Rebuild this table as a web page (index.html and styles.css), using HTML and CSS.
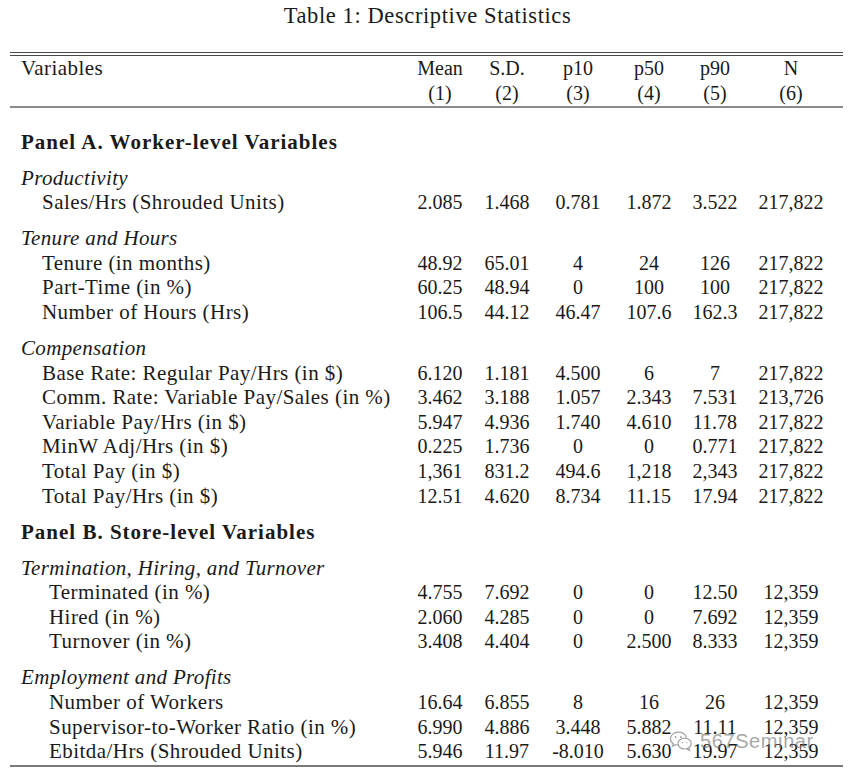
FILE: index.html
```html
<!DOCTYPE html>
<html>
<head>
<meta charset="utf-8">
<link rel="stylesheet" href="styles.css">
</head>
<body>
<div class="page">
  <div class="title">Table 1: Descriptive Statistics</div>
  <div class="rule-double"></div>
  <div class="row"><span class="label">Variables</span><span>Mean</span><span>S.D.</span><span>p10</span><span>p50</span><span>p90</span><span>N</span></div>
  <div class="row"><span class="label"></span><span>(1)</span><span>(2)</span><span>(3)</span><span>(4)</span><span>(5)</span><span>(6)</span></div>
  <div class="rule-mid"></div>

  <div class="row panel first"><span class="label bold">Panel A. Worker-level Variables</span></div>

  <div class="row group"><span class="label it">Productivity</span></div>
  <div class="row"><span class="label subA">Sales/Hrs (Shrouded Units)</span><span>2.085</span><span>1.468</span><span>0.781</span><span>1.872</span><span>3.522</span><span>217,822</span></div>

  <div class="row group"><span class="label it">Tenure and Hours</span></div>
  <div class="row"><span class="label subA">Tenure (in months)</span><span>48.92</span><span>65.01</span><span>4</span><span>24</span><span>126</span><span>217,822</span></div>
  <div class="row"><span class="label subA">Part-Time (in %)</span><span>60.25</span><span>48.94</span><span>0</span><span>100</span><span>100</span><span>217,822</span></div>
  <div class="row"><span class="label subA">Number of Hours (Hrs)</span><span>106.5</span><span>44.12</span><span>46.47</span><span>107.6</span><span>162.3</span><span>217,822</span></div>

  <div class="row group"><span class="label it">Compensation</span></div>
  <div class="row"><span class="label subA">Base Rate: Regular Pay/Hrs (in $)</span><span>6.120</span><span>1.181</span><span>4.500</span><span>6</span><span>7</span><span>217,822</span></div>
  <div class="row"><span class="label subA">Comm. Rate: Variable Pay/Sales (in %)</span><span>3.462</span><span>3.188</span><span>1.057</span><span>2.343</span><span>7.531</span><span>213,726</span></div>
  <div class="row"><span class="label subA">Variable Pay/Hrs (in $)</span><span>5.947</span><span>4.936</span><span>1.740</span><span>4.610</span><span>11.78</span><span>217,822</span></div>
  <div class="row"><span class="label subA">MinW Adj/Hrs (in $)</span><span>0.225</span><span>1.736</span><span>0</span><span>0</span><span>0.771</span><span>217,822</span></div>
  <div class="row"><span class="label subA">Total Pay (in $)</span><span>1,361</span><span>831.2</span><span>494.6</span><span>1,218</span><span>2,343</span><span>217,822</span></div>
  <div class="row"><span class="label subA">Total Pay/Hrs (in $)</span><span>12.51</span><span>4.620</span><span>8.734</span><span>11.15</span><span>17.94</span><span>217,822</span></div>

  <div class="row group"><span class="label bold">Panel B. Store-level Variables</span></div>

  <div class="row group"><span class="label it">Termination, Hiring, and Turnover</span></div>
  <div class="row"><span class="label subB">Terminated (in %)</span><span>4.755</span><span>7.692</span><span>0</span><span>0</span><span>12.50</span><span>12,359</span></div>
  <div class="row"><span class="label subB">Hired (in %)</span><span>2.060</span><span>4.285</span><span>0</span><span>0</span><span>7.692</span><span>12,359</span></div>
  <div class="row"><span class="label subB">Turnover (in %)</span><span>3.408</span><span>4.404</span><span>0</span><span>2.500</span><span>8.333</span><span>12,359</span></div>

  <div class="row group"><span class="label it">Employment and Profits</span></div>
  <div class="row"><span class="label subB">Number of Workers</span><span>16.64</span><span>6.855</span><span>8</span><span>16</span><span>26</span><span>12,359</span></div>
  <div class="row"><span class="label subB">Supervisor-to-Worker Ratio (in %)</span><span>6.990</span><span>4.886</span><span>3.448</span><span>5.882</span><span>11.11</span><span>12,359</span></div>
  <div class="row"><span class="label subB">Ebitda/Hrs (Shrouded Units)</span><span>5.946</span><span>11.97</span><span>-8.010</span><span>5.630</span><span>19.97</span><span>12,359</span></div>
  <div class="rule-bottom"></div>

  <div class="watermark">
    <svg class="wm-icon" width="24" height="22" viewBox="0 0 24 22">
      <path d="M9.5 2.2C5 2.2 1.4 5.1 1.4 8.7c0 2 1.1 3.8 2.9 5l-.7 2.4 2.8-1.4c1 .3 2 .4 3.1.4" fill="none" stroke="#8a8a8a" stroke-width="1.2"/>
      <path d="M17.6 7.6C16.5 4.5 13.3 2.2 9.5 2.2" fill="none" stroke="#8a8a8a" stroke-width="1.2"/>
      <ellipse cx="15.6" cy="13.6" rx="6.6" ry="5.4" fill="none" stroke="#8a8a8a" stroke-width="1.2"/>
      <path d="M19.8 18.2l.8 2.2-2.6-1.2" fill="none" stroke="#8a8a8a" stroke-width="1.2"/>
      <circle cx="6.6" cy="7" r="0.9" fill="#8a8a8a"/>
      <circle cx="11.8" cy="7" r="0.9" fill="#8a8a8a"/>
      <circle cx="13.4" cy="12.6" r="0.7" fill="#8a8a8a"/>
      <circle cx="17.8" cy="12.6" r="0.7" fill="#8a8a8a"/>
    </svg>
    <span class="wm-text">567Seminar</span>
  </div>
</div>
</body>
</html>
```

FILE: styles.css
```css
html, body {
  margin: 0;
  padding: 0;
  background: #ffffff;
}

body {
  color: #1a1a1a;
  font-family: "Liberation Serif", "Times New Roman", serif;
  font-size: 20px;
}

.page {
  position: relative;
  width: 833px;
  margin-left: 10px;
  padding-top: 4px;
}

.title {
  text-align: center;
  font-size: 22.5px;
  letter-spacing: 0.6px;
  line-height: 24px;
  height: 24px;
  padding-left: 2px;
}

.rule-double {
  margin-top: 24px;
  height: 2px;
  border-top: 1px solid #4a4a4a;
  border-bottom: 1px solid #4a4a4a;
}

.rule-mid {
  margin-top: 1px;
  border-top: 2px solid #8a8a8a;
}

.rule-bottom {
  margin-top: 1.6px;
  border-top: 2px solid #7a7a7a;
}

.row {
  display: grid;
  grid-template-columns: 398px 64px 70px 72px 70px 62px 90px;
  height: 24.6px;
  line-height: 24.6px;
  white-space: nowrap;
}

.row > span {
  text-align: center;
}

.row > span.label {
  text-align: left;
  padding-left: 11px;
  font-size: 21px;
  letter-spacing: 0.45px;
}

.row.first {
  margin-top: 21.5px;
}

.row.group {
  margin-top: 11.4px;
}

.row > span.bold {
  font-weight: bold;
  letter-spacing: 1px;
}

.row > span.it {
  font-style: italic;
  letter-spacing: 0.33px;
}

.row > span.subA {
  padding-left: 32px;
}

.row > span.subB {
  padding-left: 39px;
}

.watermark {
  position: absolute;
  left: 659px;
  top: 729px;
  display: flex;
  align-items: center;
  gap: 7px;
  opacity: 0.8;
}

.wm-icon {
  display: block;
}

.wm-text {
  font-family: "Liberation Sans", Arial, sans-serif;
  font-size: 20px;
  letter-spacing: 0.6px;
  color: rgba(110, 110, 110, 0.75);
  line-height: 24px;
}
```
